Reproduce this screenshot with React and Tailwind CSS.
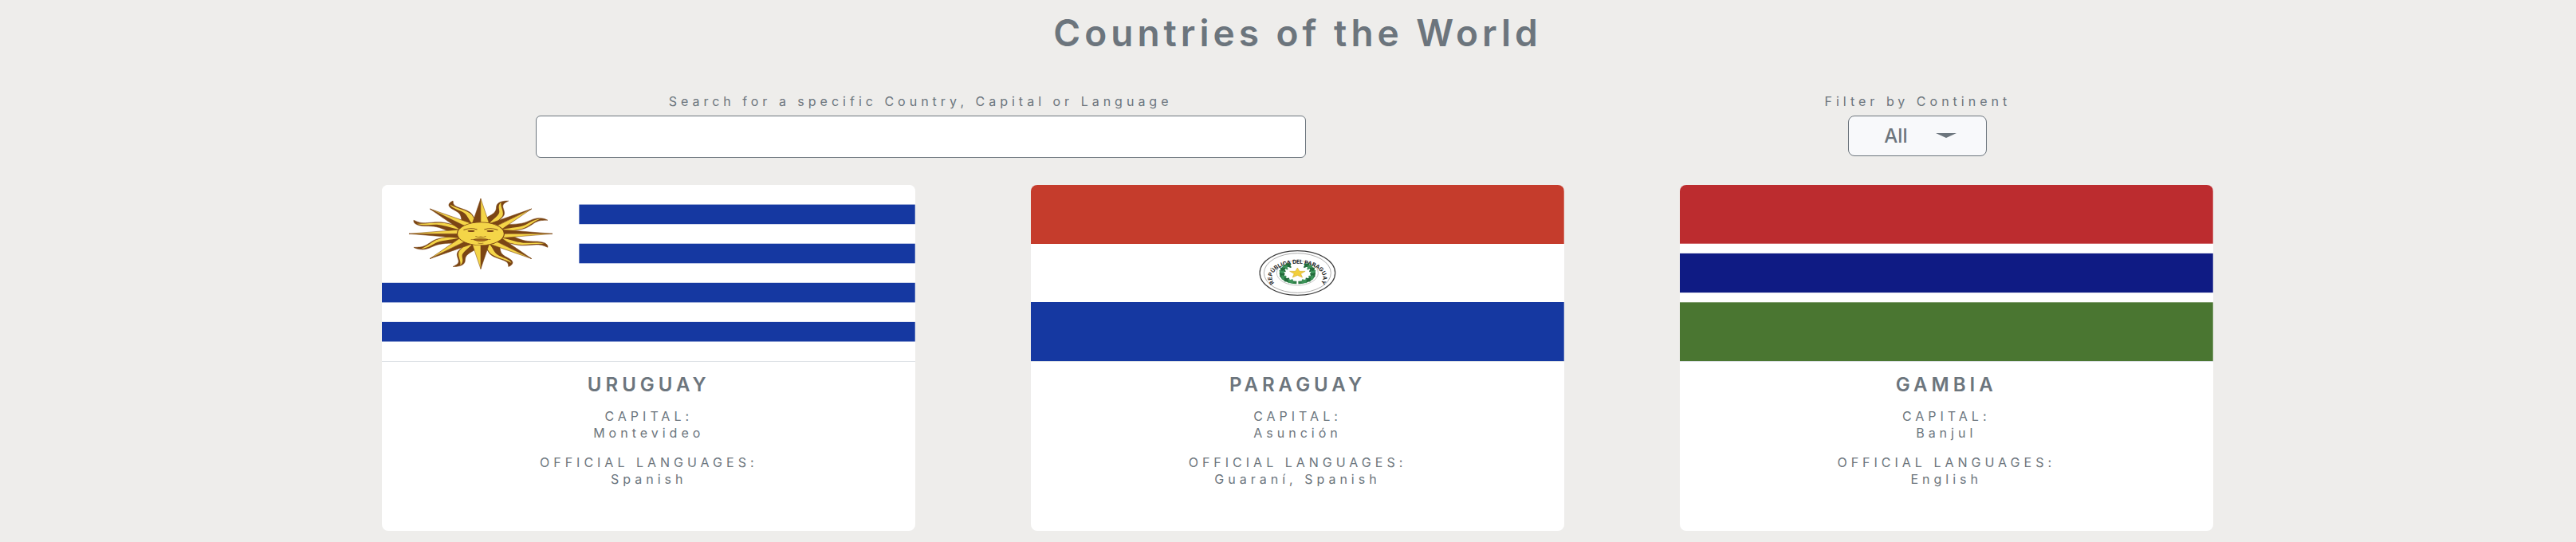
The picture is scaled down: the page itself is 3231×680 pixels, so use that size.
import React from "react";

const STRAIGHT = [0, 45, 90, 135, 180, 225, 270, 315];
const WAVY = [22.5, 67.5, 112.5, 157.5, 202.5, 247.5, 292.5, 337.5];

function Sun() {
  return (
    <g transform="translate(124 61.3) scale(1 0.49)" strokeLinejoin="round">
      {WAVY.map((a) => (
        <g key={a} transform={`rotate(${a})`}>
          <path
            d="M-12,-24 C-12,-38 -5,-48 -5,-58 C-5,-68 -12,-74 -9,-83 C-7,-88 -3,-90 0,-91 C-2,-85 -4,-82 -1,-75 C3,-67 10,-60 9,-49 C8,-40 8,-34 12,-24Z"
            fill="#7b4514"
            stroke="#7b4514"
            strokeWidth="0.6"
          />
          <path
            d="M0,-24 C-1,-38 3,-48 1,-58 C-1,-66 -9,-74 -7,-84 C-4,-72 8,-62 8,-49 C7,-40 7,-34 11,-24Z"
            fill="#f4d548"
          />
        </g>
      ))}
      {STRAIGHT.map((a) => (
        <g key={a} transform={`rotate(${a})`} stroke="#7b4514" strokeWidth="0.7">
          <path d="M0,-90 L-11,-24 L0,-20Z" fill="#7b4514" />
          <path d="M0,-90 L11,-24 L0,-20Z" fill="#f4d548" />
        </g>
      ))}
      <circle r="29.5" fill="#f4d548" stroke="#7b4514" strokeWidth="1.2" />
      <g fill="none" stroke="#7b4514" strokeLinecap="round">
        <path d="M-21,-10 Q-13,-17 -5,-11 M21,-10 Q13,-17 5,-11" strokeWidth="1.5" />
        <path d="M-6,7 Q-3,9 0,8 Q3,9 6,7" strokeWidth="1.5" />
        <path d="M-12,15 Q0,10 12,15 M-3,24 Q0,25 3,24" strokeWidth="1.2" />
      </g>
      <ellipse cx="-12" cy="-7" rx="4.5" ry="2.5" fill="#7b4514" />
      <ellipse cx="12" cy="-7" rx="4.5" ry="2.5" fill="#7b4514" />
      <path d="M-9,15 Q0,12 9,15 Q0,23 -9,15Z" fill="#a8691f" stroke="#7b4514" strokeWidth="1" />
    </g>
  );
}

function UruguayFlag() {
  return (
    <svg viewBox="0 0 669 221" preserveAspectRatio="none" className="block h-[221px] w-full" role="img" aria-label="Flag of Uruguay">
      <rect width="669" height="221" fill="#fff" />
      <g fill="#1538a1">
        <rect x="247.5" y="24.6" width="421.5" height="24.6" />
        <rect x="247.5" y="73.7" width="421.5" height="24.6" />
        <rect y="122.8" width="669" height="24.6" />
        <rect y="171.9" width="669" height="24.6" />
      </g>
      <Sun />
    </svg>
  );
}

const LEAVES = [125, 142, 159, 176, 193, 210, 227, 244];

function ParaguayFlag() {
  return (
    <svg
      viewBox="0 0 669 221"
      preserveAspectRatio="none"
      className="block h-[221px] w-full tracking-normal"
      role="img"
      aria-label="Flag of Paraguay"
    >
      <rect width="669" height="221" fill="#fff" />
      <rect width="669" height="74" fill="#c53c2c" />
      <rect y="147" width="669" height="74" fill="#1538a1" />
      <g transform="translate(334.5 110.5)">
        <ellipse rx="47.3" ry="27.8" fill="#fff" stroke="#3c3c3c" strokeWidth="1.2" />
        <ellipse rx="42" ry="24.8" fill="none" stroke="#888" strokeWidth="0.7" />
        <ellipse rx="26" ry="15.5" fill="none" stroke="#aaa" strokeWidth="0.7" />
        <path id="seal-arc" d="M-29,12.5 A32,17 0 1 1 29,12.5" fill="none" />
        <text fontSize="7" fontWeight="700" fill="#222" fontFamily="Inter, sans-serif" textAnchor="middle">
          <textPath href="#seal-arc" startOffset="50%">REPÚBLICA DEL PARAGUAY</textPath>
        </text>
        {[1, -1].map((side) => (
          <g key={side} transform={`scale(${side} 1)`}>
            <path d="M-10,-10.5 C-27,-5 -24,11 -1,12" fill="none" stroke="#2d7d46" strokeWidth="3.5" />
            {LEAVES.map((deg) => {
              const t = (deg * Math.PI) / 180;
              const x = 19.5 * Math.cos(t);
              const y = -11.5 * Math.sin(t);
              return (
                <g key={deg} transform={`translate(${x} ${y})`} fill={deg % 2 ? "#22693a" : "#3c9459"}>
                  <ellipse rx="4.2" ry="1.5" transform="rotate(38)" />
                  <ellipse rx="3.6" ry="1.4" transform="rotate(-35)" />
                </g>
              );
            })}
          </g>
        ))}
        <path
          d="M0,-6.5 L2.6,-2.2 L9.8,-2.2 L4.2,1 L6.2,5.6 L0,2.9 L-6.2,5.6 L-4.2,1 L-9.8,-2.2 L-2.6,-2.2Z"
          fill="#f2cf3b"
          stroke="#c9a227"
          strokeWidth="0.5"
        />
      </g>
    </svg>
  );
}

function GambiaFlag() {
  return (
    <svg viewBox="0 0 669 221" preserveAspectRatio="none" className="block h-[221px] w-full" role="img" aria-label="Flag of the Gambia">
      <rect width="669" height="221" fill="#fff" />
      <rect width="669" height="73.7" fill="#bc2c2f" />
      <rect y="85.9" width="669" height="49.2" fill="#0f1b84" />
      <rect y="147.3" width="669" height="73.7" fill="#4a7631" />
    </svg>
  );
}

const countries = [
  { name: "URUGUAY", capital: "Montevideo", languages: "Spanish", Flag: UruguayFlag },
  { name: "PARAGUAY", capital: "Asunción", languages: "Guaraní, Spanish", Flag: ParaguayFlag },
  { name: "GAMBIA", capital: "Banjul", languages: "English", Flag: GambiaFlag },
];

function CountryCard({ name, capital, languages, Flag }) {
  return (
    <article className="overflow-hidden rounded-lg bg-white text-center">
      <Flag />
      <div className="border-t border-[#dee2e6] px-4 pt-4 pb-[54px]">
        <h2 className="text-2xl leading-[26px] font-semibold tracking-[5px]">{name}</h2>
        <p className="mt-4">
          CAPITAL:
          <br />
          {capital}
        </p>
        <p className="mt-4">
          OFFICIAL LANGUAGES:
          <br />
          {languages}
        </p>
      </div>
    </article>
  );
}

export default function App() {
  return (
    <div className="min-h-screen bg-[#eeedeb] pt-4 pb-3 pl-6 font-['Inter',sans-serif] text-[16px] leading-[21px] tracking-[5px] text-[#6c757d]">
      <h1 className="text-center text-[46px] leading-[50px] font-semibold tracking-[5px]">Countries of the World</h1>

      <div className="mx-auto mt-[51px] flex w-[78%] items-start justify-around">
        <div className="flex w-[966px] flex-col gap-[7px] text-center">
          <label htmlFor="search">Search for a specific Country, Capital or Language</label>
          <input
            id="search"
            type="text"
            className="h-[53px] w-full rounded-md border border-[#6c757d] bg-white px-6 text-2xl tracking-normal outline-none"
          />
        </div>
        <div className="flex w-[356px] flex-col items-center gap-[7px]">
          <label htmlFor="continent">Filter by Continent</label>
          <div className="relative w-[174px]">
            <select
              id="continent"
              defaultValue="All"
              className="block h-[51px] w-full appearance-none rounded-lg border border-[#6c757d] bg-[#f8f9fb] pl-[44px] text-2xl font-medium tracking-normal outline-none"
            >
              <option>All</option>
              <option>Africa</option>
              <option>Americas</option>
              <option>Asia</option>
              <option>Europe</option>
              <option>Oceania</option>
            </select>
            <svg viewBox="0 0 26 6" className="pointer-events-none absolute top-[22px] right-[38px] h-[6px] w-[26px]" aria-hidden="true">
              <path d="M0,0 H26 L13,6Z" fill="#6c757d" />
            </svg>
          </div>
        </div>
      </div>

      <main className="mx-auto mt-[34px] grid w-[71.6%] grid-cols-3 gap-[145px]">
        {countries.map((c) => (
          <CountryCard key={c.name} {...c} />
        ))}
      </main>
    </div>
  );
}
